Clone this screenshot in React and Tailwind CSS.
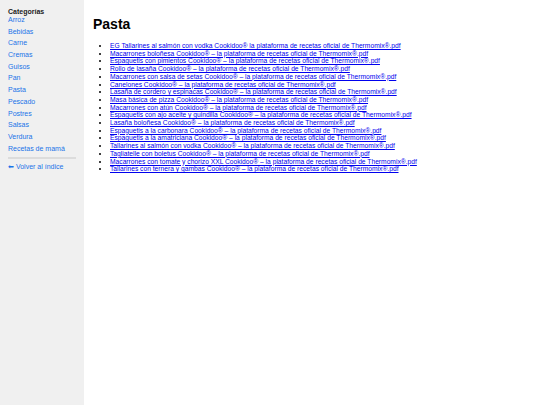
import React from "react";

const cats = ["Arroz","Bebidas","Carne","Cremas","Guisos","Pan","Pasta","Pescado","Postres","Salsas","Verdura","Recetas de mamá"];
const items = [
  "EG Tallarines al salmón con vodka Cookidoo® la plataforma de recetas oficial de Thermomix®.pdf",
  "Macarrones boloñesa Cookidoo® – la plataforma de recetas oficial de Thermomix®.pdf",
  "Espaguetis con pimientos Cookidoo® – la plataforma de recetas oficial de Thermomix®.pdf",
  "Rollo de lasaña Cookidoo® – la plataforma de recetas oficial de Thermomix®.pdf",
  "Macarrones con salsa de setas Cookidoo® – la plataforma de recetas oficial de Thermomix®.pdf",
  "Canelones Cookidoo® – la plataforma de recetas oficial de Thermomix®.pdf",
  "Lasaña de cordero y espinacas Cookidoo® – la plataforma de recetas oficial de Thermomix®.pdf",
  "Masa básica de pizza Cookidoo® – la plataforma de recetas oficial de Thermomix®.pdf",
  "Macarrones con atún Cookidoo® – la plataforma de recetas oficial de Thermomix®.pdf",
  "Espaguetis con ajo aceite y guindilla Cookidoo® – la plataforma de recetas oficial de Thermomix®.pdf",
  "Lasaña boloñesa Cookidoo® – la plataforma de recetas oficial de Thermomix®.pdf",
  "Espaguetis a la carbonara Cookidoo® – la plataforma de recetas oficial de Thermomix®.pdf",
  "Espaguetis a la amatriciana Cookidoo® – la plataforma de recetas oficial de Thermomix®.pdf",
  "Tallarines al salmón con vodka Cookidoo® – la plataforma de recetas oficial de Thermomix®.pdf",
  "Tagliatelle con boletus Cookidoo® – la plataforma de recetas oficial de Thermomix®.pdf",
  "Macarrones con tomate y chorizo XXL Cookidoo® – la plataforma de recetas oficial de Thermomix®.pdf",
  "Tallarines con ternera y gambas Cookidoo® – la plataforma de recetas oficial de Thermomix®.pdf",
];

export default function App() {
  return (
    <div className="flex min-h-[405px] bg-white font-['Liberation_Sans',Arial,sans-serif]">
      <aside className="w-[84px] shrink-0 bg-[#f0f0f0] px-[8px] pt-[8px]">
        <div className="text-[7px] font-bold leading-[8px] text-[#222]">Categorías</div>
        <ul className="flex flex-col">
          {cats.map((c) => (
            <li key={c} className="h-[11.7px] text-[7px] leading-[8px] text-[#1a73e8]">{c}</li>
          ))}
        </ul>
        <div className="mt-[1px] h-[2px] w-[68px] bg-[#dcdcdc]"></div>
        <div className="mt-[4px] text-[7px] leading-[8px] text-[#1a73e8]">⬅ Volver al índice</div>
      </aside>
      <main className="flex-1 pl-[9px] pt-[14px]">
        <h1 className="text-[14px] font-bold leading-[20px] text-black">Pasta</h1>
        <ul className="mt-[8px] list-disc pl-[17px] text-[6.7px] leading-[7.7px]">
          {items.map((t) => (
            <li key={t}><a href="#" className="text-[#0000ee] underline">{t}</a></li>
          ))}
        </ul>
      </main>
    </div>
  );
}
